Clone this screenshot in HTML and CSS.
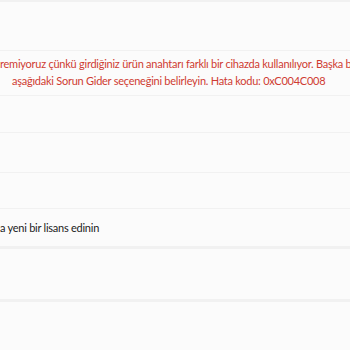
FILE: index.html
```html
<!DOCTYPE html>
<html lang="tr">
<head>
  <meta charset="UTF-8" />
  <meta name="viewport" content="width=device-width, initial-scale=1.0" />
  <title>Etkinleştirme</title>
  <link rel="stylesheet" href="styles.css">
</head>
<body>
  <div class="settings">
    <div class="card card-top"></div>
    <div class="card card-error">
      <p class="error-line">remiyoruz çünkü girdiğiniz ürün anahtarı farklı bir cihazda kullanılıyor. Başka bir ürün anahtarı girin</p>
      <p class="error-line indent">aşağıdaki Sorun Gider seçeneğini belirleyin. Hata kodu: 0xC004C008</p>
    </div>
    <div class="card card-a"></div>
    <div class="card card-b"></div>
    <div class="card card-c"></div>
    <div class="card card-store">
      <p class="store-line">a yeni bir lisans edinin</p>
    </div>
    <div class="card card-d wide-gap"></div>
    <div class="card card-e wide-gap"></div>
  </div>
</body>
</html>
```

FILE: styles.css
```css
* {
  margin: 0;
  padding: 0;
  box-sizing: border-box;
}

body {
  font-family: Lato, 'Noto Sans', sans-serif;
  background: #f1f1f1;
  height: 100vh;
  overflow: hidden;
}

.settings {
  display: flex;
  flex-direction: column;
  gap: 1px;
  padding-top: 2px;
}

.card {
  background: #fbfbfb;
}

.wide-gap {
  margin-top: 2px;
}

.card-top { height: 48px; }
.card-error {
  height: 44px;
  padding-top: 4px;
  overflow: hidden;
}
.card-a { height: 36px; }
.card-b { height: 39px; }
.card-c { height: 35px; }
.card-store {
  height: 37px;
  padding-top: 10px;
}
.card-d { height: 50px; }
.card-e { height: 60px; }

.error-line {
  color: #cf3b32;
  font-size: 11px;
  letter-spacing: -0.25px;
  line-height: 17px;
  white-space: nowrap;
}

.indent {
  padding-left: 12px;
}

.store-line {
  color: #1b1b1b;
  font-size: 11px;
  letter-spacing: -0.25px;
  line-height: 17px;
  white-space: nowrap;
}
```
